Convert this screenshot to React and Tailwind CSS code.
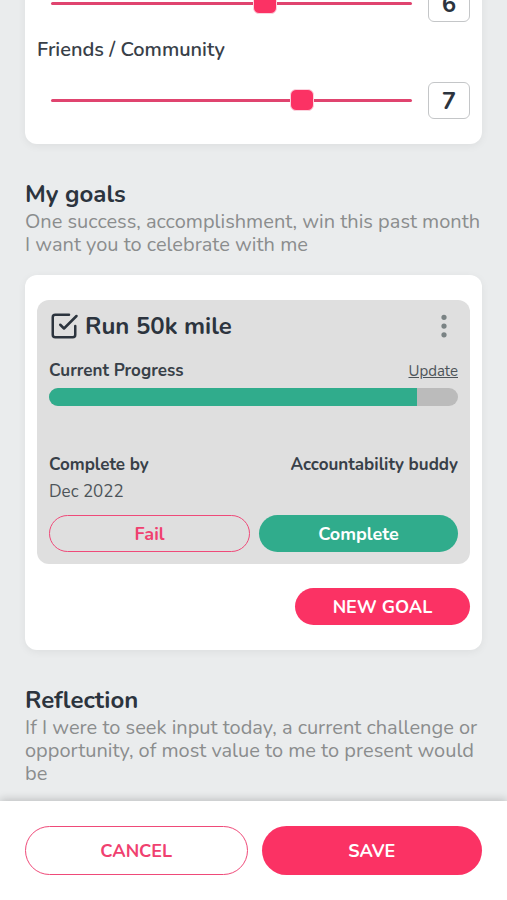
import React, { useState } from 'react';
import { FiCheckSquare } from 'react-icons/fi';
import { BsThreeDotsVertical } from 'react-icons/bs';

const ScoreRow = ({ id, label, initial }) => {
    const [value, setValue] = useState(initial);
    return (
        <div className="flex items-center">
            <input
                id={id}
                type="range"
                min="0"
                max="10"
                step="0.1"
                aria-label={label}
                value={value}
                onChange={(e) => setValue(Number(e.target.value))}
                className="ml-3.5 mr-4 h-6 min-w-0 flex-1 appearance-none bg-transparent [&::-webkit-slider-runnable-track]:h-[3px] [&::-webkit-slider-runnable-track]:rounded-full [&::-webkit-slider-runnable-track]:bg-[#e0446f] [&::-webkit-slider-thumb]:-mt-[10px] [&::-webkit-slider-thumb]:h-[22px] [&::-webkit-slider-thumb]:w-6 [&::-webkit-slider-thumb]:appearance-none [&::-webkit-slider-thumb]:rounded-md [&::-webkit-slider-thumb]:border [&::-webkit-slider-thumb]:border-[#fbd3de] [&::-webkit-slider-thumb]:bg-[#fb3264]"
            />
            <input
                type="text"
                inputMode="numeric"
                aria-label={`${label} score`}
                value={Math.round(value)}
                onChange={(e) => setValue(Number(e.target.value) || 0)}
                className="h-[37px] w-[42px] rounded-md border border-[#c4c6c8] bg-white text-center text-2xl font-bold text-[#2c343e]"
            />
        </div>
    );
};

const SectionHeader = ({ title, children }) => (
    <header className="mt-9">
        <h2 className="text-2xl leading-7 font-bold text-[#2c343e]">{title}</h2>
        <p className="mt-0.5 text-xl leading-[23px] text-[#8b8d8d]">{children}</p>
    </header>
);

const GoalCard = ({ title, progress, date }) => (
    <article className="rounded-xl bg-[#dfdfdf] p-3">
        <div className="flex h-7 items-center text-[#2c343e]">
            <FiCheckSquare size={30} className="shrink-0" />
            <h3 className="ml-1.5 flex-1 text-2xl leading-7 font-bold">{title}</h3>
            <button type="button" aria-label="Goal options" className="text-[#7a8384]">
                <BsThreeDotsVertical size={28} />
            </button>
        </div>
        <div className="mt-5 flex items-center justify-between leading-[22px]">
            <span className="text-[17px] font-bold text-[#384048]">Current Progress</span>
            <a href="#update" className="text-[15px] text-[#4d5459] underline">
                Update
            </a>
        </div>
        <div
            role="progressbar"
            aria-label="Current Progress"
            aria-valuenow={progress}
            className="mt-1.5 h-[18px] overflow-hidden rounded-full bg-[#bbbbbb]"
        >
            <div className="h-full bg-[#30ac8c]" style={{ width: `${progress}%` }} />
        </div>
        <div className="mt-12 flex justify-between leading-[22px] text-[#384048]">
            <span className="text-[17px] font-bold">Complete by</span>
            <span className="text-[17px] font-bold">Accountability buddy</span>
        </div>
        <p className="mt-[5px] text-[17px] leading-[22px] text-[#4d5459]">{date}</p>
        <div className="mt-3 flex gap-[9px]">
            <button type="button" className="h-[37px] flex-1 rounded-full border border-[#ef4a79] text-lg leading-6 font-bold text-[#f0406f]">
                Fail
            </button>
            <button type="button" className="h-[37px] flex-1 rounded-full bg-[#30ac8c] text-lg leading-6 font-bold text-white">
                Complete
            </button>
        </div>
    </article>
);

const App = () => {
    return (
        <div className="flex h-screen flex-col bg-[#eaeced] font-['Nunito','Open_Sans',sans-serif]">
            <main className="min-h-0 flex-1 overflow-hidden px-[25px]">
                <section className="-mt-[15px] rounded-b-xl bg-white px-3 pb-[25px] shadow-[0_2px_8px_rgba(0,0,0,0.06)]">
                    <ScoreRow id="family" label="Family" initial={6} />
                    <label htmlFor="friends" className="mt-4 mb-5 block text-xl leading-6 font-semibold text-[#384048]">
                        Friends / Community
                    </label>
                    <ScoreRow id="friends" label="Friends / Community" initial={7.1} />
                </section>

                <SectionHeader title="My goals">
                    One success, accomplishment, win this past month I want you to celebrate with me
                </SectionHeader>
                <section className="mt-[19px] rounded-xl bg-white px-3 py-[25px] shadow-[0_2px_8px_rgba(0,0,0,0.06)]">
                    <GoalCard title="Run 50k mile" progress={90} date="Dec 2022" />
                    <div className="mt-6 flex justify-end">
                        <button type="button" className="h-[37px] w-[175px] rounded-full bg-[#fb3264] text-lg leading-6 font-bold text-white">
                            NEW GOAL
                        </button>
                    </div>
                </section>

                <SectionHeader title="Reflection">
                    If I were to seek input today, a current challenge or opportunity, of most value to me to present would be
                </SectionHeader>
            </main>

            <footer className="flex gap-3.5 bg-white p-[25px] shadow-[0_-2px_8px_rgba(0,0,0,0.18)]">
                <button type="button" className="h-[49px] flex-1 rounded-full border border-[#ef4a79] text-lg font-bold text-[#f0406f]">
                    CANCEL
                </button>
                <button type="button" className="h-[49px] flex-1 rounded-full bg-[#fb3264] text-lg font-bold text-white">
                    SAVE
                </button>
            </footer>
        </div>
    );
};

export default App;
